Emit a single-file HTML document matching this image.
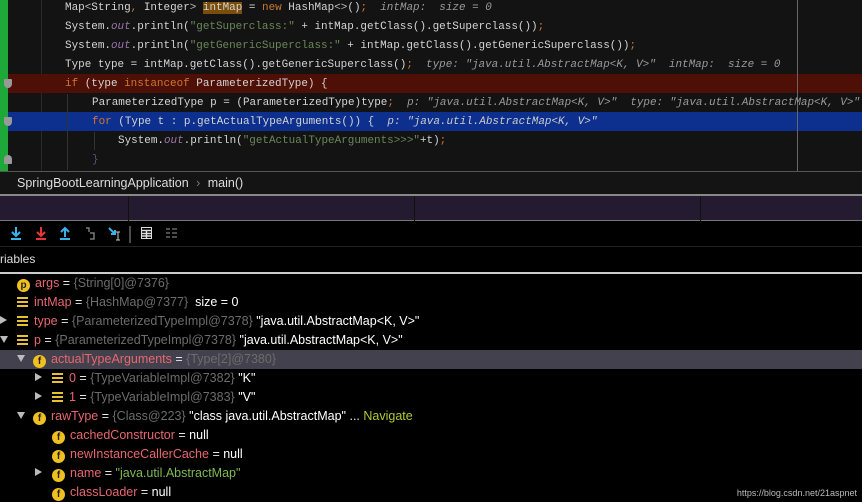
<!DOCTYPE html>
<html><head><meta charset="utf-8"><style>
*{margin:0;padding:0;box-sizing:border-box}
body{width:862px;height:500px;overflow:hidden;background:#000;position:relative;font-family:"Liberation Sans",sans-serif}
.code{position:absolute;left:0;top:0;width:862px;height:172px;background:#131313}
.ln{position:absolute;left:65px;height:19px;line-height:19px;font-family:"Liberation Mono",monospace;font-size:10.95px;color:#d4d4d4;white-space:pre}
.k{color:#cc7832}.s{color:#6a8759}.o{color:#9876aa;font-style:italic}.c{color:#9a9a9a;font-style:italic}.p{color:#bbb}
.row{position:absolute;left:0;height:19px;line-height:19px;font-size:12.5px;color:#e8e8e8;white-space:pre}
.n{color:#e8676f}.g{color:#6c6c6c}.gr{color:#7fba52}.b{color:#fff}
.ic{display:inline-block;width:13px;height:13px;border-radius:50%;background:#f0c020;color:#222;font-size:10px;font-weight:bold;text-align:center;line-height:13px;vertical-align:-1px;margin-right:5px}
.li{display:inline-block;width:11px;height:10px;vertical-align:-1px;margin-right:6px;background:repeating-linear-gradient(#e8c030 0 2px,transparent 2px 4px)}
.tri{display:inline-block;width:0;height:0;margin-right:8px;vertical-align:1px}
.tr{border-left:7px solid #bbb;border-top:4px solid transparent;border-bottom:4px solid transparent}
.td{border-top:7px solid #bbb;border-left:4px solid transparent;border-right:4px solid transparent}
</style></head><body>
<div class="code">
 <div style="position:absolute;left:0;top:0;width:8px;height:172px;background:#1fa83a"></div>
 <div style="position:absolute;left:41px;top:0;width:1px;height:172px;background:#2a2a2a"></div>
 <div style="position:absolute;left:8px;top:74px;width:854px;height:19px;background:#4e0f06"></div>
 <div style="position:absolute;left:8px;top:112px;width:854px;height:19px;background:#0d2f8e"></div>
 <div style="position:absolute;left:797px;top:0;width:1px;height:172px;background:#666"></div>
 <div style="position:absolute;left:67px;top:94px;width:1px;height:76px;background:#333"></div>
 <div style="position:absolute;left:94px;top:132px;width:1px;height:18px;background:#333"></div>
 <div class="ln" style="top:-1px">Map<span class="p">&lt;</span>String<span class="k">,</span> Integer<span class="p">&gt;</span> <span style="background:#7a4d0b">intMap</span> = <span class="k">new</span> HashMap<span class="p">&lt;&gt;</span>()<span class="k">;</span>  <span class="c">intMap:  size = 0</span></div>
 <div class="ln" style="top:18px">System.<span class="o">out</span>.println(<span class="s">"getSuperclass:"</span> + intMap.getClass().getSuperclass())<span class="k">;</span></div>
 <div class="ln" style="top:37px">System.<span class="o">out</span>.println(<span class="s">"getGenericSuperclass:"</span> + intMap.getClass().getGenericSuperclass())<span class="k">;</span></div>
 <div class="ln" style="top:56px">Type type = intMap.getClass().getGenericSuperclass()<span class="k">;</span>  <span class="c">type: "java.util.AbstractMap&lt;K, V&gt;"  intMap:  size = 0</span></div>
 <div class="ln" style="top:75px"><span class="k">if</span> (type <span class="k">instanceof</span> ParameterizedType) {</div>
 <div class="ln" style="top:94px;left:92px">ParameterizedType p = (ParameterizedType)type<span class="k">;</span>  <span class="c">p: "java.util.AbstractMap&lt;K, V&gt;"  type: "java.util.AbstractMap&lt;K, V&gt;"</span></div>
 <div class="ln" style="top:113px;left:92px"><span class="k">for</span> (Type t : p.getActualTypeArguments()) {  <span class="c" style="color:#ccc">p: "java.util.AbstractMap&lt;K, V&gt;"</span></div>
 <div class="ln" style="top:132px;left:118px">System.<span class="o">out</span>.println(<span class="s">"getActualTypeArguments&gt;&gt;&gt;"</span>+t)<span class="k">;</span></div>
 <div class="ln" style="top:151px;left:92px;color:#557">}</div>
 <div style="position:absolute;left:4px;top:79px;width:8px;height:9px;background:#999;border-radius:1px 1px 4px 4px"></div>
 <div style="position:absolute;left:4px;top:117px;width:8px;height:9px;background:#999;border-radius:1px 1px 4px 4px"></div>
 <div style="position:absolute;left:4px;top:155px;width:8px;height:9px;background:#999;border-radius:4px 4px 1px 1px"></div>
</div>
<div style="position:absolute;left:0;top:171px;width:862px;height:1px;background:#555"></div>
<div style="position:absolute;left:0;top:172px;width:862px;height:23px;background:#141414;color:#ddd;font-size:12.5px;line-height:23px;padding-left:17px">SpringBootLearningApplication <span style="color:#777;margin:0 4px">›</span> main()</div>
<div style="position:absolute;left:0;top:194px;width:862px;height:27px;background:#241b30;border-top:2px solid #888;border-bottom:1px solid #777"></div>
<div style="position:absolute;left:128px;top:196px;width:1px;height:25px;background:#111"></div>
<div style="position:absolute;left:414px;top:196px;width:1px;height:25px;background:#111"></div>
<div style="position:absolute;left:700px;top:196px;width:1px;height:25px;background:#111"></div>
<div style="position:absolute;left:0;top:221px;width:862px;height:25px;background:#000">
 <svg width="200" height="25" style="position:absolute;left:0;top:0">
  <g stroke-width="2" fill="none">
   <path d="M16 6v9M12 11l4 4 4-4M11 18h10" stroke="#3bb3e8"/>
   <path d="M41 6v9M37 11l4 4 4-4M36 18h10" stroke="#e8343a"/>
   <path d="M65 16V7M61 11l4-4 4 4M60 18h10" stroke="#3bb3e8"/>
   <path d="M86 7h3v4M90 12h4v6h-4" stroke="#777" stroke-width="1.5"/>
   <path d="M109 7l6 6M115 9v4h-4" stroke="#3bb3e8"/>
   <path d="M118 11v8M116 11h4M116 19h4" stroke="#ccc" stroke-width="1"/>
   <path d="M130 5v17" stroke="#999" stroke-width="1"/>
   <rect x="141.5" y="6.5" width="10" height="11" stroke="#ddd" stroke-width="1"/>
   <path d="M142 9.5h9M142 12.5h9M142 15h9M146.5 10v7" stroke="#ddd" stroke-width="1.5"/>
   <path d="M166 8h4M166 12h4M166 16h4M172 8h5M172 12h5M172 16h5" stroke="#666" stroke-width="1.5"/>
  </g>
 </svg>
</div>
<div style="position:absolute;left:0;top:246px;width:862px;height:1px;background:#222"></div>
<div style="position:absolute;left:0;top:252px;color:#ddd;font-size:12px">riables</div>
<div style="position:absolute;left:0;top:272px;width:862px;height:2px;background:#ccc"></div>
<div style="position:absolute;left:0;top:350px;width:862px;height:19px;background:#42414d"></div>
<div class="row" style="top:274px;left:17px"><span class="ic">p</span><span class="n">args</span> = <span class="g">{String[0]@7376}</span></div>
<div class="row" style="top:293px;left:17px"><span class="li"></span><span class="n">intMap</span> = <span class="g">{HashMap@7377}</span>  <span class="b">size = 0</span></div>
<div class="row" style="top:312px;left:0"><span class="tri tr" style="margin-right:10px"></span><span class="li"></span><span class="n">type</span> = <span class="g">{ParameterizedTypeImpl@7378}</span> <span class="b">"java.util.AbstractMap&lt;K, V&gt;"</span></div>
<div class="row" style="top:331px;left:0"><span class="tri td" style="margin-right:9px"></span><span class="li"></span><span class="n">p</span> = <span class="g">{ParameterizedTypeImpl@7378}</span> <span class="b">"java.util.AbstractMap&lt;K, V&gt;"</span></div>
<div class="row" style="top:350px;left:17px"><span class="tri td"></span><span class="ic">f</span><span class="n">actualTypeArguments</span> = <span class="g">{Type[2]@7380}</span></div>
<div class="row" style="top:369px;left:35px"><span class="tri tr" style="margin-right:10px"></span><span class="li"></span><span class="n">0</span> = <span class="g">{TypeVariableImpl@7382}</span> <span class="b">"K"</span></div>
<div class="row" style="top:388px;left:35px"><span class="tri tr" style="margin-right:10px"></span><span class="li"></span><span class="n">1</span> = <span class="g">{TypeVariableImpl@7383}</span> <span class="b">"V"</span></div>
<div class="row" style="top:407px;left:17px"><span class="tri td"></span><span class="ic">f</span><span class="n">rawType</span> = <span class="g">{Class@223}</span> <span class="b">"class java.util.AbstractMap"</span> ... <span style="color:#b5c832">Navigate</span></div>
<div class="row" style="top:426px;left:52px"><span class="ic">f</span><span class="n">cachedConstructor</span> = <span class="b">null</span></div>
<div class="row" style="top:445px;left:52px"><span class="ic">f</span><span class="n">newInstanceCallerCache</span> = <span class="b">null</span></div>
<div class="row" style="top:464px;left:35px"><span class="tri tr" style="margin-right:10px"></span><span class="ic">f</span><span class="n">name</span> = <span class="gr">"java.util.AbstractMap"</span></div>
<div class="row" style="top:483px;left:52px"><span class="ic">f</span><span class="n">classLoader</span> = <span class="b">null</span></div>
<div style="position:absolute;right:5px;top:488px;font-size:9px;color:#bbb">https://blog.csdn.net/21aspnet</div>
</body></html>
